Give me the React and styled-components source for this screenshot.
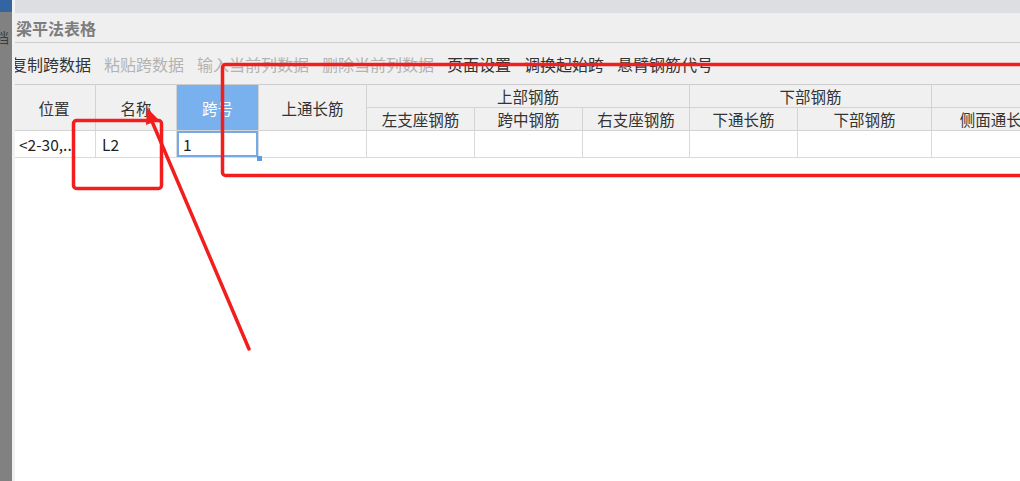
import React from 'react';
import styled, { createGlobalStyle } from 'styled-components';

const GlobalStyle = createGlobalStyle`
  html, body, #root {
    margin: 0;
    height: 100%;
  }
  body {
    font-family: "Microsoft YaHei", "Noto Sans CJK SC", "Noto Sans", sans-serif;
    overflow: hidden;
    background: #fff;
  }
`;

const Page = styled.div`
  display: flex;
  height: 100%;
  position: relative;
  overflow: hidden;
`;

const Strip = styled.div`
  width: 12px;
  flex: none;
  background: #818181;
  display: flex;
  flex-direction: column;
  overflow: hidden;
`;

const StripTop = styled.div`
  height: 12px;
  background: #3564a3;
`;

const StripGlyph = styled.span`
  margin: 18px 0 0 -5px;
  font-size: 14px;
  line-height: 14px;
  color: #3c3c3c;
  white-space: nowrap;
`;

const Main = styled.div`
  flex: 1;
  min-width: 0;
  display: flex;
  flex-direction: column;
  overflow: hidden;
  border-left: 3px solid #f1f1f1;
`;

const TopBar = styled.div`
  height: 13px;
  background: #dcdee2;
  margin-left: -3px;
`;

const TitleBar = styled.div`
  height: 29px;
  background: #efefef;
  border-bottom: 1px solid #cdcdcd;
  display: flex;
  align-items: center;
  padding-left: 4px;
  margin-left: -3px;
  font-size: 16px;
  font-weight: bold;
  color: #7d7d7d;
`;

const Toolbar = styled.div`
  height: 41px;
  background: #f0f0f0;
  display: flex;
  align-items: center;
  gap: 13px;
  margin-left: -4px;
  white-space: nowrap;
`;

const ToolItem = styled.span`
  font-size: 16px;
  line-height: 20px;
  color: ${p => (p.disabled ? '#b3b3b3' : '#333')};
`;

const Grid = styled.table`
  border-collapse: collapse;
  table-layout: fixed;
  width: 1190px;
  margin-left: -3px;
  font-size: 15.5px;
  color: #333;
`;

const HeadCell = styled.th`
  font-weight: normal;
  background: ${p => (p.active ? '#79b1ef' : '#f0f0f0')};
  color: ${p => (p.active ? '#fff' : '#333')};
  border: 1px solid #d3d3d3;
  border-top-color: #cdcdcd;
  height: 22px;
  padding: 0;
  line-height: 20px;
  text-align: center;
  white-space: nowrap;
  overflow: hidden;
`;

const Cell = styled.td`
  position: relative;
  height: 26px;
  padding: 0 0 0 6px;
  border: 1px solid #dadada;
  border-top: none;
  line-height: 20px;
  white-space: nowrap;
  color: #222;
  box-shadow: ${p =>
    p.selected ? 'inset 0 0 0 2px #74aae9' : p.rowMark ? 'inset 2px 0 0 #84b4ea' : 'none'};
`;

const Handle = styled.span`
  position: absolute;
  right: -4px;
  bottom: -4px;
  width: 5px;
  height: 5px;
  background: #5d9be2;
`;

const Marks = styled.svg`
  position: absolute;
  left: 0;
  top: 0;
  pointer-events: none;
`;

const widths = [83, 81, 82, 108, 108, 108, 107, 108, 134, 134, 137];

const tools = [
  { label: '复制跨数据' },
  { label: '粘贴跨数据', disabled: true },
  { label: '输入当前列数据', disabled: true },
  { label: '删除当前列数据', disabled: true },
  { label: '页面设置' },
  { label: '调换起始跨' },
  { label: '悬臂钢筋代号' },
];

const subHeads = ['左支座钢筋', '跨中钢筋', '右支座钢筋', '下通长筋', '下部钢筋', '侧面通长筋', '侧面原位筋'];

export default function App() {
  return (
    <Page>
      <GlobalStyle />
      <Strip>
        <StripTop />
        <StripGlyph>档</StripGlyph>
      </Strip>
      <Main>
        <TopBar />
        <TitleBar>梁平法表格</TitleBar>
        <Toolbar>
          {tools.map(t => (
            <ToolItem key={t.label} disabled={t.disabled}>
              {t.label}
            </ToolItem>
          ))}
        </Toolbar>
        <Grid>
          <colgroup>
            {widths.map((w, i) => (
              <col key={i} style={{ width: w }} />
            ))}
          </colgroup>
          <thead>
            <tr>
              <HeadCell rowSpan={2}>位置</HeadCell>
              <HeadCell rowSpan={2}>名称</HeadCell>
              <HeadCell rowSpan={2} active>跨号</HeadCell>
              <HeadCell rowSpan={2}>上通长筋</HeadCell>
              <HeadCell colSpan={3}>上部钢筋</HeadCell>
              <HeadCell colSpan={2}>下部钢筋</HeadCell>
              <HeadCell colSpan={2} />
              <HeadCell rowSpan={2} />
            </tr>
            <tr>
              {subHeads.map(h => (
                <HeadCell key={h}>{h}</HeadCell>
              ))}
            </tr>
          </thead>
          <tbody>
            <tr>
              <Cell rowMark>&lt;2-30,..</Cell>
              <Cell>L2</Cell>
              <Cell selected>
                1
                <Handle />
              </Cell>
              {widths.slice(3).map((w, i) => (
                <Cell key={i} />
              ))}
            </tr>
          </tbody>
        </Grid>
      </Main>
      <Marks width="1020" height="481" viewBox="0 0 1020 481">
        <g fill="none" stroke="#f21e1e" strokeWidth="3.5" strokeLinejoin="round">
          <rect x="73.5" y="120.5" width="88" height="68" rx="3" />
          <rect x="222.5" y="64.5" width="830" height="111" rx="3" />
          <line x1="249" y1="349" x2="151" y2="119" strokeLinecap="round" />
        </g>
        <polygon points="147,108 159,120 146,125" fill="#f21e1e" />
      </Marks>
    </Page>
  );
}
